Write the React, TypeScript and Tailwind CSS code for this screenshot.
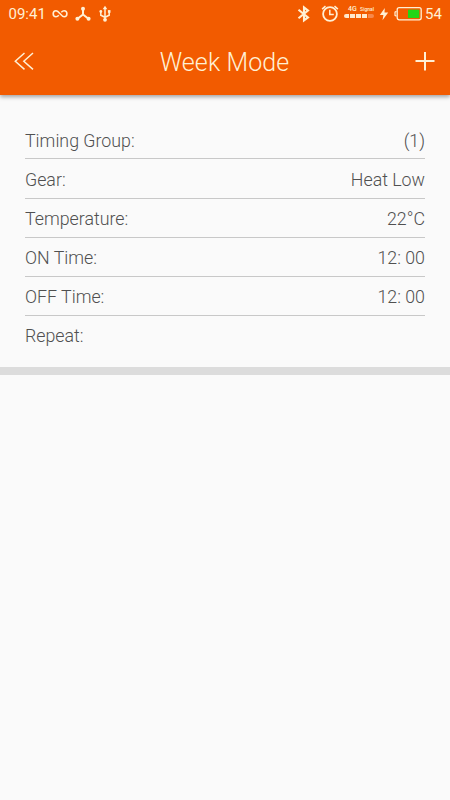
import React from "react";

const rows = [
  { label: "Timing Group:", value: "(1)", spacing: "h-[40px] pt-[4px]" },
  { label: "Gear:", value: "Heat Low", spacing: "h-[40px] pt-[2px]" },
  { label: "Temperature:", value: "22°C", spacing: "h-[39px] pt-[2px]" },
  { label: "ON Time:", value: "12: 00", spacing: "h-[39px] pt-[2px]" },
  { label: "OFF Time:", value: "12: 00", spacing: "h-[39px] pt-[2px]" },
  { label: "Repeat:", value: "", spacing: "h-[40px]" },
];

function StatusBar() {
  return (
    <div className="flex h-7 items-center text-[#fff0d4]">
      <span className="ml-[8.5px] w-[36.5px] whitespace-nowrap text-[15px] leading-7">09:41</span>
      <svg className="ml-[7px] shrink-0" width="16" height="28" viewBox="0 0 16 28" fill="none" stroke="currentColor" strokeWidth="1.6">
        <path d="M9.3 12.3C10.5 11.1 11.3 10.8 12.1 10.8C13.7 10.8 14.9 12.1 14.9 13.8S13.7 16.8 12.1 16.8C9.6 16.8 6.9 10.8 4 10.8C2.4 10.8 1.2 12.1 1.2 13.8S2.4 16.8 4 16.8C4.9 16.8 5.8 16.4 6.8 15.3" />
      </svg>
      <svg className="ml-[7px] shrink-0" width="16" height="28" viewBox="0 0 16 28" fill="currentColor">
        <path d="M8 8.5V14.5L2.5 18.7M8 14.5L13.5 18.7" fill="none" stroke="currentColor" strokeWidth="2" />
        <circle cx="8" cy="8.8" r="2" />
        <circle cx="2.4" cy="18.7" r="2" />
        <circle cx="13.6" cy="18.7" r="2" />
      </svg>
      <svg className="ml-[8px] shrink-0" width="12" height="28" viewBox="0 0 12 28" fill="currentColor">
        <path d="M6 8V20M1.8 12V15.3L6 17.3L10.2 15.3V12" fill="none" stroke="currentColor" strokeWidth="1.5" />
        <path d="M6 5.8L3.7 9.3H8.3Z" />
        <circle cx="1.8" cy="11.5" r="1.4" />
        <path d="M8.9 10.1H11.5V12.8H8.9Z" />
        <circle cx="6" cy="19.8" r="1.9" />
      </svg>
      <svg className="ml-auto shrink-0" width="14" height="28" viewBox="0 0 14 28" fill="none" stroke="currentColor" strokeWidth="2.1">
        <path d="M1.5 9.7L11 17.4L7 20.4V7.4L11 10.6L1.5 18.3" />
      </svg>
      <svg className="ml-[10px] shrink-0" width="18" height="28" viewBox="0 0 18 28" fill="none" stroke="currentColor">
        <circle cx="9" cy="14" r="6.9" strokeWidth="1.8" />
        <path d="M8.8 9.7V14.5H12.8" strokeWidth="1.5" />
        <path d="M1.1 9.1L4.5 6.1M13.5 6.1L16.9 9.1" strokeWidth="1.5" />
      </svg>
      <div className="ml-[5px] flex h-7 w-[32px] shrink-0 flex-col pt-[6px]">
        <div className="flex h-[7px] items-center justify-between pl-1 pr-[2px]">
          <span className="text-[7px] font-medium leading-[7px]">4G</span>
          <span className="text-[5px] font-medium leading-[7px]">Signal</span>
        </div>
        <div className="mt-[1px] flex h-[4px] w-[30px] gap-px overflow-hidden rounded-[2px]">
          <i className="w-[5px] bg-[#ffe8cc]" />
          <i className="w-[5px] bg-[#ffe8cc]" />
          <i className="w-[5px] bg-[#ffe8cc]" />
          <i className="w-[5px] bg-[#ffe8cc]" />
          <i className="w-[6px] bg-[#f7884b]" />
        </div>
      </div>
      <svg className="ml-[3px] shrink-0" width="10" height="28" viewBox="0 0 10 28" fill="currentColor">
        <path d="M5.8 8L.8 15H4.4L3.5 20.3L9.2 12.5H5.5Z" />
      </svg>
      <svg className="ml-[5px] shrink-0" width="28" height="28" viewBox="0 0 28 28" fill="none">
        <rect x="3.2" y="7.7" width="24" height="12.1" rx="2" stroke="currentColor" strokeWidth="1.3" />
        <path d="M14 9.7H25.3V18H14Z" fill="#22d516" />
        <path d="M2.5 11.4L1 12.2V15.4L2.5 16.2" stroke="currentColor" strokeWidth="1.2" />
      </svg>
      <span className="ml-[3px] mr-[8px] w-[17px] whitespace-nowrap text-[15px] leading-7">54</span>
    </div>
  );
}

export default function App() {
  return (
    <div className="h-[800px] w-[450px] overflow-hidden bg-[#fafafa] font-['Roboto',sans-serif]">
      <header className="relative h-[95px] bg-[#f25b00] shadow-[0_2px_4px_rgba(0,0,0,0.35)]">
        <StatusBar />
        <div className="flex h-[67px] items-center justify-between pl-[14px] pr-[15px] text-[#fff0d4]">
          <svg width="20" height="20" viewBox="0 0 20 20" fill="none" stroke="currentColor" strokeWidth="1.5">
            <path d="M10.5 1L1.3 9.2L10.5 17.4M19 1L9.8 9.2L19 17.4" />
          </svg>
          <h1 className="whitespace-nowrap pt-[2px] text-[25px] font-light leading-[30px] tracking-[0.1px]">Week Mode</h1>
          <svg width="20" height="20" viewBox="0 0 20 20" stroke="currentColor" strokeWidth="2">
            <path d="M.5 9H19.5M10 0V18.5" />
          </svg>
        </div>
      </header>
      <main>
        <section className="border-b-[8px] border-[#dcdcdc] px-[25px] pb-[11px] pt-[24px]">
          {rows.map((row, index) => (
            <div
              key={row.label}
              className={`${row.spacing} flex items-center justify-between text-[17.8px] font-light leading-5 text-[#505050] ${index < 5 ? "border-b border-[#c8c8c8]" : ""}`}
            >
              <span>{row.label}</span>
              <span>{row.value}</span>
            </div>
          ))}
        </section>
      </main>
    </div>
  );
}
